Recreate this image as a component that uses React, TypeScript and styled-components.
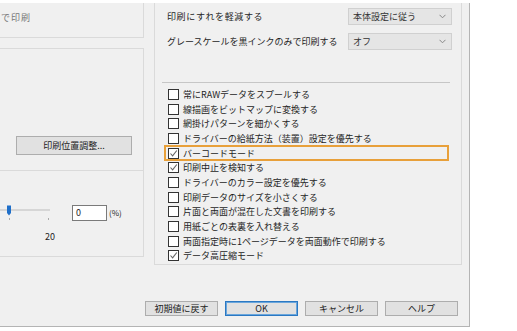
import React from 'react'
import styled, { createGlobalStyle } from 'styled-components'

const GlobalStyle = createGlobalStyle`
  html, body {
    margin: 0;
    padding: 0;
    background: #ffffff;
  }
  body {
    font-family: "Noto Sans CJK JP", "Noto Sans", sans-serif;
    font-size: 9px;
    color: #1e1e1e;
  }
`

const Window = styled.div`
  width: 469px;
  height: 323px;
  margin-top: 3px;
  background: #f0f0f0;
  border-right: 1px solid #b4b4b4;
  border-bottom: 1px solid #b4b4b4;
  display: flex;
  flex-direction: column;
`

const Body = styled.div`
  display: flex;
  gap: 10px;
  height: 262px;
`

const LeftColumn = styled.div`
  width: 144px;
  display: flex;
  flex-direction: column;
`

const LeftGroup = styled.div<{ $h: number; $gapTop?: number; $top?: boolean; $bottom?: boolean }>`
  height: ${p => p.$h}px;
  margin-top: ${p => p.$gapTop ?? 0}px;
  box-sizing: border-box;
  border-right: 1px solid #dadada;
  border-top: ${p => (p.$top ? '1px solid #dadada' : 'none')};
  border-bottom: ${p => (p.$bottom ? '1px solid #dadada' : 'none')};
  display: flex;
  flex-direction: column;
`

const GrayText = styled.div`
  color: #777;
  padding: 8px 0 0 1px;
  letter-spacing: 1px;
`

const PushButton = styled.button<{ $primary?: boolean }>`
  font-family: inherit;
  font-size: 9px;
  color: #222;
  background: #e1e1e1;
  border: 1px solid ${p => (p.$primary ? '#2b78c2' : '#adadad')};
  box-shadow: ${p => (p.$primary ? 'inset 0 0 0 1px #6aa6dc' : 'none')};
  height: 15px;
  width: 73px;
  padding: 0;
  line-height: 13px;
  border-radius: 0;
`

const WideButton = styled(PushButton)`
  width: 116px;
  height: 19px;
  line-height: 17px;
  margin: 87px 0 0 16px;
`

const SliderRow = styled.div`
  display: flex;
  align-items: flex-start;
  margin-top: 34px;
`

const SliderBox = styled.div`
  width: 58px;
  display: flex;
  flex-direction: column;
`

const NumberInput = styled.div`
  width: 30px;
  height: 14px;
  margin-left: 14px;
  background: #fff;
  border: 1px solid #7a7a7a;
  font-size: 9px;
  line-height: 14px;
  padding-left: 3px;
  box-sizing: content-box;
`

const Unit = styled.span`
  margin-left: 2px;
  line-height: 16px;
  font-size: 8px;
`

const SliderValue = styled.div`
  margin: 9px 0 0 45px;
  font-size: 9px;
`

const RightGroup = styled.div`
  width: 308px;
  box-sizing: border-box;
  border-left: 1px solid #dadada;
  border-right: 1px solid #dadada;
  border-bottom: 1px solid #dadada;
  padding: 5px 0 0 12px;
  display: flex;
  flex-direction: column;
`

const SettingRow = styled.div`
  display: flex;
  align-items: center;
  justify-content: space-between;
  width: 282px;
  height: 17px;
  & + & {
    margin-top: 8px;
  }
`

const Label = styled.span<{ $spread?: number }>`
  letter-spacing: ${p => p.$spread ?? 0}px;
`

const Select = styled.div`
  width: 93px;
  height: 15px;
  background: #e5e5e5;
  border: 1px solid #d0d0d0;
  display: flex;
  align-items: center;
  justify-content: space-between;
  padding: 0 5px 0 4px;
  box-sizing: content-box;
  margin-right: -3px;
  color: #333;
`

const Separator = styled.div`
  width: 288px;
  height: 1px;
  background: #c6c6c6;
  margin: 32px 0 4px -5px;
`

const CheckList = styled.div`
  display: flex;
  flex-direction: column;
  margin-left: -2px;
`

const CheckRow = styled.div<{ $highlight?: boolean }>`
  width: 283px;
  height: 14.7px;
  display: flex;
  align-items: center;
  gap: 4px;
  padding-left: 3px;
  box-sizing: border-box;
  outline: ${p => (p.$highlight ? '2px solid #e8a03a' : 'none')};
  outline-offset: -1px;
  white-space: nowrap;
`

const Box = styled.div`
  width: 9px;
  height: 9px;
  border: 1px solid #333;
  background: #fff;
  flex: none;
  display: flex;
  align-items: center;
  justify-content: center;
`

const ButtonBar = styled.div`
  display: flex;
  justify-content: flex-end;
  gap: 7px;
  margin-top: 36px;
  padding-right: 11px;
`

const Chevron = () => (
  <svg width="7" height="5" viewBox="0 0 7 5">
    <path d="M0.5 0.8 L3.5 3.8 L6.5 0.8" fill="none" stroke="#888" strokeWidth="1" />
  </svg>
)

const Tick = () => (
  <svg width="9" height="9" viewBox="0 0 9 9">
    <path d="M1.5 4.5 L3.6 6.8 L7.8 1.5" fill="none" stroke="#666" strokeWidth="1.1" />
  </svg>
)

const Slider = () => (
  <svg width="58" height="16" viewBox="0 0 58 16">
    <rect x="0" y="4" width="50" height="2" fill="#d6d6d6" />
    <path d="M7 0.5 H11 V8 L9 10.5 L7 8 Z" fill="#1f6fc9" />
    <rect x="9" y="13" width="1" height="2" fill="#aaa" />
    <rect x="48" y="13" width="1" height="2" fill="#aaa" />
  </svg>
)

const options = [
  { label: '常にRAWデータをスプールする', checked: false },
  { label: '線描画をビットマップに変換する', checked: false },
  { label: '網掛けパターンを細かくする', checked: false },
  { label: 'ドライバーの給紙方法（装置）設定を優先する', checked: false },
  { label: 'バーコードモード', checked: true, highlight: true },
  { label: '印刷中止を検知する', checked: true },
  { label: 'ドライバーのカラー設定を優先する', checked: false },
  { label: '印刷データのサイズを小さくする', checked: false },
  { label: '片面と両面が混在した文書を印刷する', checked: false },
  { label: '用紙ごとの表裏を入れ替える', checked: false },
  { label: '両面指定時に1ページデータを両面動作で印刷する', checked: false },
  { label: 'データ高圧縮モード', checked: true },
]

const App: React.FC = () => (
  <>
    <GlobalStyle />
    <Window>
      <Body>
        <LeftColumn>
          <LeftGroup $h={35} $bottom>
            <GrayText>で印刷</GrayText>
          </LeftGroup>
          <LeftGroup $h={122} $gapTop={10} $top>
            <WideButton>印刷位置調整...</WideButton>
          </LeftGroup>
          <LeftGroup $h={87} $top $bottom>
            <SliderRow>
              <SliderBox>
                <Slider />
              </SliderBox>
              <NumberInput>0</NumberInput>
              <Unit>(%)</Unit>
            </SliderRow>
            <SliderValue>20</SliderValue>
          </LeftGroup>
        </LeftColumn>
        <RightGroup>
          <SettingRow>
            <Label $spread={0.6}>印刷にすれを軽減する</Label>
            <Select>
              <span>本体設定に従う</span>
              <Chevron />
            </Select>
          </SettingRow>
          <SettingRow>
            <Label>グレースケールを黒インクのみで印刷する</Label>
            <Select>
              <span>オフ</span>
              <Chevron />
            </Select>
          </SettingRow>
          <Separator />
          <CheckList>
            {options.map(o => (
              <CheckRow key={o.label} $highlight={o.highlight}>
                <Box>{o.checked && <Tick />}</Box>
                <span>{o.label}</span>
              </CheckRow>
            ))}
          </CheckList>
        </RightGroup>
      </Body>
      <ButtonBar>
        <PushButton>初期値に戻す</PushButton>
        <PushButton $primary>OK</PushButton>
        <PushButton>キャンセル</PushButton>
        <PushButton>ヘルプ</PushButton>
      </ButtonBar>
    </Window>
  </>
)

export default App
